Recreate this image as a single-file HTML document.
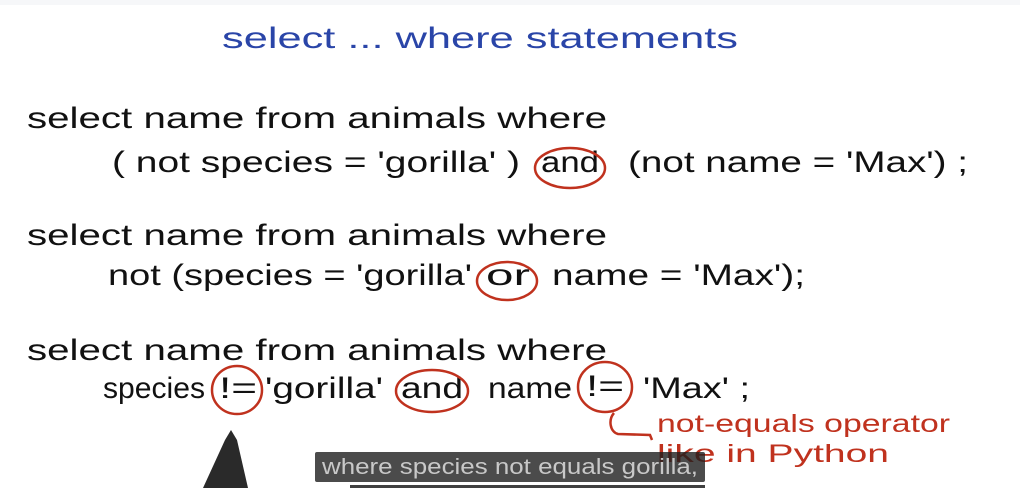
<!DOCTYPE html>
<html><head><meta charset="utf-8"><style>
html,body{margin:0;padding:0;background:#fff;width:1020px;height:488px;overflow:hidden}
svg{display:block}
</style></head><body>
<svg width="1020" height="488" viewBox="0 0 1020 488" xmlns="http://www.w3.org/2000/svg">
<rect x="0" y="0" width="1020" height="5" fill="#f6f7f9"/>
<g font-family="Liberation Sans, sans-serif" font-size="30">
<text x="222" y="48" fill="#2a45a8" textLength="516" lengthAdjust="spacingAndGlyphs">select ... where statements</text>
<g fill="#111">
<text x="27" y="128" textLength="580" lengthAdjust="spacingAndGlyphs">select name from animals where</text>
<text x="112" y="172" textLength="408" lengthAdjust="spacingAndGlyphs">( not species = 'gorilla' )</text>
<text x="541" y="172" textLength="58" lengthAdjust="spacingAndGlyphs">and</text>
<text x="628" y="172" textLength="340" lengthAdjust="spacingAndGlyphs">(not name = 'Max') ;</text>
<text x="27" y="245" textLength="580" lengthAdjust="spacingAndGlyphs">select name from animals where</text>
<text x="108" y="285" textLength="364" lengthAdjust="spacingAndGlyphs">not (species = 'gorilla'</text>
<text x="486" y="285" textLength="44" lengthAdjust="spacingAndGlyphs">or</text>
<text x="552" y="285" textLength="253" lengthAdjust="spacingAndGlyphs">name = 'Max');</text>
<text x="27" y="360" textLength="580" lengthAdjust="spacingAndGlyphs">select name from animals where</text>
<text x="103" y="398" textLength="102" lengthAdjust="spacingAndGlyphs">species</text>
<text x="219" y="398" textLength="38" lengthAdjust="spacingAndGlyphs">!=</text>
<text x="265" y="398" textLength="118" lengthAdjust="spacingAndGlyphs">'gorilla'</text>
<text x="401" y="398" textLength="62" lengthAdjust="spacingAndGlyphs">and</text>
<text x="488" y="398" textLength="84" lengthAdjust="spacingAndGlyphs">name</text>
<text x="586" y="396" textLength="38" lengthAdjust="spacingAndGlyphs">!=</text>
<text x="643" y="398" textLength="107" lengthAdjust="spacingAndGlyphs">'Max' ;</text>
</g>
<g fill="none" stroke="#c0321e" stroke-width="2.5">
<ellipse cx="570" cy="168" rx="35" ry="20"/>
<ellipse cx="507" cy="281" rx="30" ry="19"/>
<ellipse cx="237" cy="390" rx="25" ry="24"/>
<ellipse cx="432" cy="391" rx="36" ry="21"/>
<ellipse cx="605" cy="387" rx="27" ry="25"/>
<path d="M614 413 C608 420 610 432 618 434 L650 435 L652 440"/>
</g>
<g fill="#c0321e" font-size="25">
<text x="657" y="432" textLength="293" lengthAdjust="spacingAndGlyphs">not-equals operator</text>
<text x="657" y="462" textLength="232" lengthAdjust="spacingAndGlyphs">like in Python</text>
</g>
</g>
<path d="M203 488 L225 440 L231 430 L237 440 L248 488 Z" fill="#2a2a2a"/>
<rect x="315" y="452" width="390" height="30" rx="2" fill="rgba(30,30,30,0.8)"/>
<text x="322" y="474" font-family="Liberation Sans, sans-serif" font-size="22" fill="#c8c8c8" textLength="376" lengthAdjust="spacingAndGlyphs">where species not equals gorilla,</text>
<rect x="350" y="485" width="355" height="3" fill="rgba(30,30,30,0.85)"/>
</svg>
</body></html>
